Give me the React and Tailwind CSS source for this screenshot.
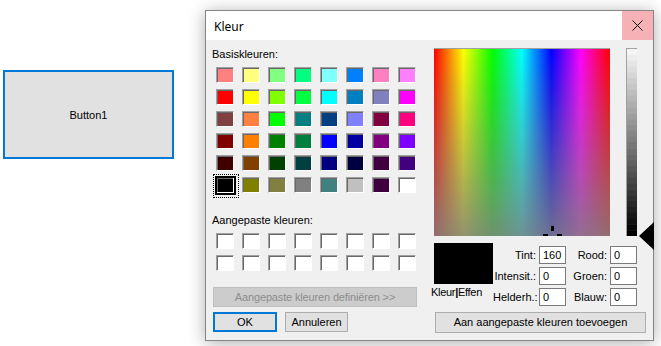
import React from "react";

const basic = [
  "bg-[#ff8080]", "bg-[#ffff80]", "bg-[#80ff80]", "bg-[#00ff80]", "bg-[#80ffff]", "bg-[#0080ff]", "bg-[#ff80c0]", "bg-[#ff80ff]",
  "bg-[#ff0000]", "bg-[#ffff00]", "bg-[#80ff00]", "bg-[#00ff40]", "bg-[#00ffff]", "bg-[#0080c0]", "bg-[#8080c0]", "bg-[#ff00ff]",
  "bg-[#804040]", "bg-[#ff8040]", "bg-[#00ff00]", "bg-[#008080]", "bg-[#004080]", "bg-[#8080ff]", "bg-[#800040]", "bg-[#ff0080]",
  "bg-[#800000]", "bg-[#ff8000]", "bg-[#008000]", "bg-[#008040]", "bg-[#0000ff]", "bg-[#0000a0]", "bg-[#800080]", "bg-[#8000ff]",
  "bg-[#400000]", "bg-[#804000]", "bg-[#004000]", "bg-[#004040]", "bg-[#000080]", "bg-[#000040]", "bg-[#400040]", "bg-[#400080]",
  "bg-[#000000]", "bg-[#808000]", "bg-[#808040]", "bg-[#808080]", "bg-[#408080]", "bg-[#c0c0c0]", "bg-[#400040]", "bg-[#ffffff]",
];

function Swatch({ color }) {
  return (
    <div className="w-[18px] h-[16px] border-t border-l border-r border-b border-t-[#a0a0a0] border-l-[#a0a0a0] border-r-white border-b-white">
      <div className={`w-full h-full border-t border-l border-t-[#696969] border-l-[#696969] ${color}`} />
    </div>
  );
}

function Spectrum() {
  const w = 176;
  const h = 188;
  return (
    <svg width={w} height={h} className="block">
      <defs>
        <linearGradient id="hue" x1="0" y1="0" x2="1" y2="0">
          <stop offset="0" stopColor="#ff0000" />
          <stop offset="0.1667" stopColor="#ffff00" />
          <stop offset="0.3333" stopColor="#00ff00" />
          <stop offset="0.5" stopColor="#00ffff" />
          <stop offset="0.6667" stopColor="#0000ff" />
          <stop offset="0.8333" stopColor="#ff00ff" />
          <stop offset="1" stopColor="#ff0000" />
        </linearGradient>
        <linearGradient id="sat" x1="0" y1="0" x2="0" y2="1">
          <stop offset="0" stopColor="#808080" stopOpacity="0" />
          <stop offset="1" stopColor="#808080" stopOpacity="0.85" />
        </linearGradient>
      </defs>
      <rect x="0" y="0" width={w} height={h} fill="url(#hue)" />
      <rect x="0" y="0" width={w} height={h} fill="url(#sat)" />
      <rect x="0" y="0" width={w} height="1" fill="#a0a0a0" />
      <rect x="117" y="178" width="3" height="5" fill="#000" />
      <rect x="109" y="186" width="5" height="2" fill="#000" />
      <rect x="123" y="186" width="5" height="2" fill="#000" />
    </svg>
  );
}

function LumBar() {
  const bands = Array.from({ length: 32 }, (_, i) => i);
  const h = 187;
  const bh = h / 32;
  return (
    <svg width="11" height="188" className="block">
      <rect x="0" y="0" width="11" height="1" fill="#a0a0a0" />
      <rect x="0" y="0" width="1" height="188" fill="#a0a0a0" />
      {bands.map((i) => {
        const v = Math.round(245 - (245 * i) / 31);
        return (
          <rect
            key={i}
            x="1"
            y={1 + i * bh}
            width="10"
            height={bh + 0.5}
            fill={`rgb(${v},${v},${v})`}
          />
        );
      })}
    </svg>
  );
}

function Field({ label, value, labelW }) {
  return (
    <div className="flex items-center h-[18px]">
      <div className={`${labelW} text-right pr-[3px] whitespace-nowrap`}>{label}</div>
      <div className="w-[27px] h-[18px] bg-white border border-[#7a7a7a] pl-[3px] flex items-center">{value}</div>
    </div>
  );
}

export default function App() {
  return (
    <div className="relative w-[661px] h-[346px] bg-white overflow-hidden font-['Liberation_Sans',Arial,sans-serif] text-[11px] leading-[13px] text-black">
      <div className="pt-[70px] pl-[3px]">
        <div className="w-[171px] h-[89px] bg-[#e1e1e1] border-2 border-[#0078d7] flex items-center justify-center pt-[1px]">
          Button1
        </div>
      </div>

      <div className="absolute left-[205px] top-[10px] w-[449px] h-[331px] border border-[#858585] bg-[#f0f0f0] shadow-[0_2px_16px_rgba(0,0,0,0.32)] flex flex-col">
        <div className="h-[29px] bg-white flex items-stretch">
          <div className="flex-1 pl-[8px] flex items-center pt-[1px] font-['Segoe_UI','Noto_Sans',sans-serif] text-[12px]">
            Kleur
          </div>
          <div className="w-[31px] bg-[#f5b1b6] flex items-center justify-center">
            <svg width="11" height="11" viewBox="0 0 11 11">
              <path d="M0.5 0.5 L10.5 10.5 M10.5 0.5 L0.5 10.5" stroke="#000" strokeWidth="1" />
            </svg>
          </div>
        </div>

        <div className="flex flex-1">
          {/* left column */}
          <div className="w-[228px] pl-[6px] pt-[8px] flex flex-col">
            <div>Basiskleuren:</div>
            <div className="ml-[4px] mt-[6px] grid grid-cols-[repeat(8,18px)] gap-x-[8px] gap-y-[6px]">
              {basic.map((c, i) =>
                i === 40 ? (
                  <div key={i} className="relative">
                    <div className="absolute left-[-3px] top-[-3px] w-[26px] h-[24px] border border-dotted border-black" />
                    <div className="absolute left-[-1px] top-[-1px] w-[21px] h-[19px] border-2 border-black" />
                    <Swatch color={c} />
                  </div>
                ) : (
                  <Swatch key={i} color={c} />
                )
              )}
            </div>
            <div className="mt-[21px]">Aangepaste kleuren:</div>
            <div className="ml-[4px] mt-[6px] grid grid-cols-[repeat(8,18px)] gap-x-[8px] gap-y-[6px]">
              {Array.from({ length: 16 }, (_, i) => (
                <Swatch key={i} color="bg-white" />
              ))}
            </div>
            <div className="ml-[1px] mt-[16px] w-[204px] h-[20px] bg-[#cccccc] border border-[#bfbfbf] text-[#8d8d8d] flex items-center justify-center tracking-[-0.15px]">
              Aangepaste kleuren definiëren &gt;&gt;
            </div>
            <div className="ml-[1px] mt-[5px] flex gap-[8px]">
              <div className="w-[64px] h-[20px] bg-[#e1e1e1] border-2 border-[#0078d7] flex items-center justify-center">
                OK
              </div>
              <div className="w-[63px] h-[20px] bg-[#e1e1e1] border border-[#adadad] flex items-center justify-center">
                Annuleren
              </div>
            </div>
          </div>

          {/* right column */}
          <div className="pt-[8px] flex flex-col">
            <div className="flex">
              <Spectrum />
              <div className="relative ml-[16px]">
                <LumBar />
                <svg width="15" height="28" className="absolute left-[13px] top-[174px]">
                  <polygon points="0,14 15,0 15,28" fill="#000" />
                </svg>
              </div>
            </div>
            <div className="mt-[7px] h-[64px] flex">
              <div className="flex flex-col w-[59px]">
                <div className="w-[59px] h-[41px] bg-black" />
                <div className="mt-[2px] -ml-[3px] whitespace-nowrap tracking-[-0.3px]">
                  Kleur<span className="font-bold">|</span>Effen
                </div>
              </div>
              <div className="mt-[3px] grid grid-cols-[auto_auto] gap-y-[2px]">
                <Field label="Tint:" value="160" labelW="w-[46px]" />
                <Field label="Rood:" value="0" labelW="w-[44px]" />
                <Field label="Intensit.:" value="0" labelW="w-[46px]" />
                <Field label="Groen:" value="0" labelW="w-[44px]" />
                <Field label="Helderh.:" value="0" labelW="w-[46px]" />
                <Field label="Blauw:" value="0" labelW="w-[44px]" />
              </div>
            </div>
            <div className="mt-[5px] ml-[1px] w-[211px] h-[21px] bg-[#e1e1e1] border border-[#adadad] flex items-center justify-center">
              Aan aangepaste kleuren toevoegen
            </div>
          </div>
        </div>
      </div>
    </div>
  );
}
